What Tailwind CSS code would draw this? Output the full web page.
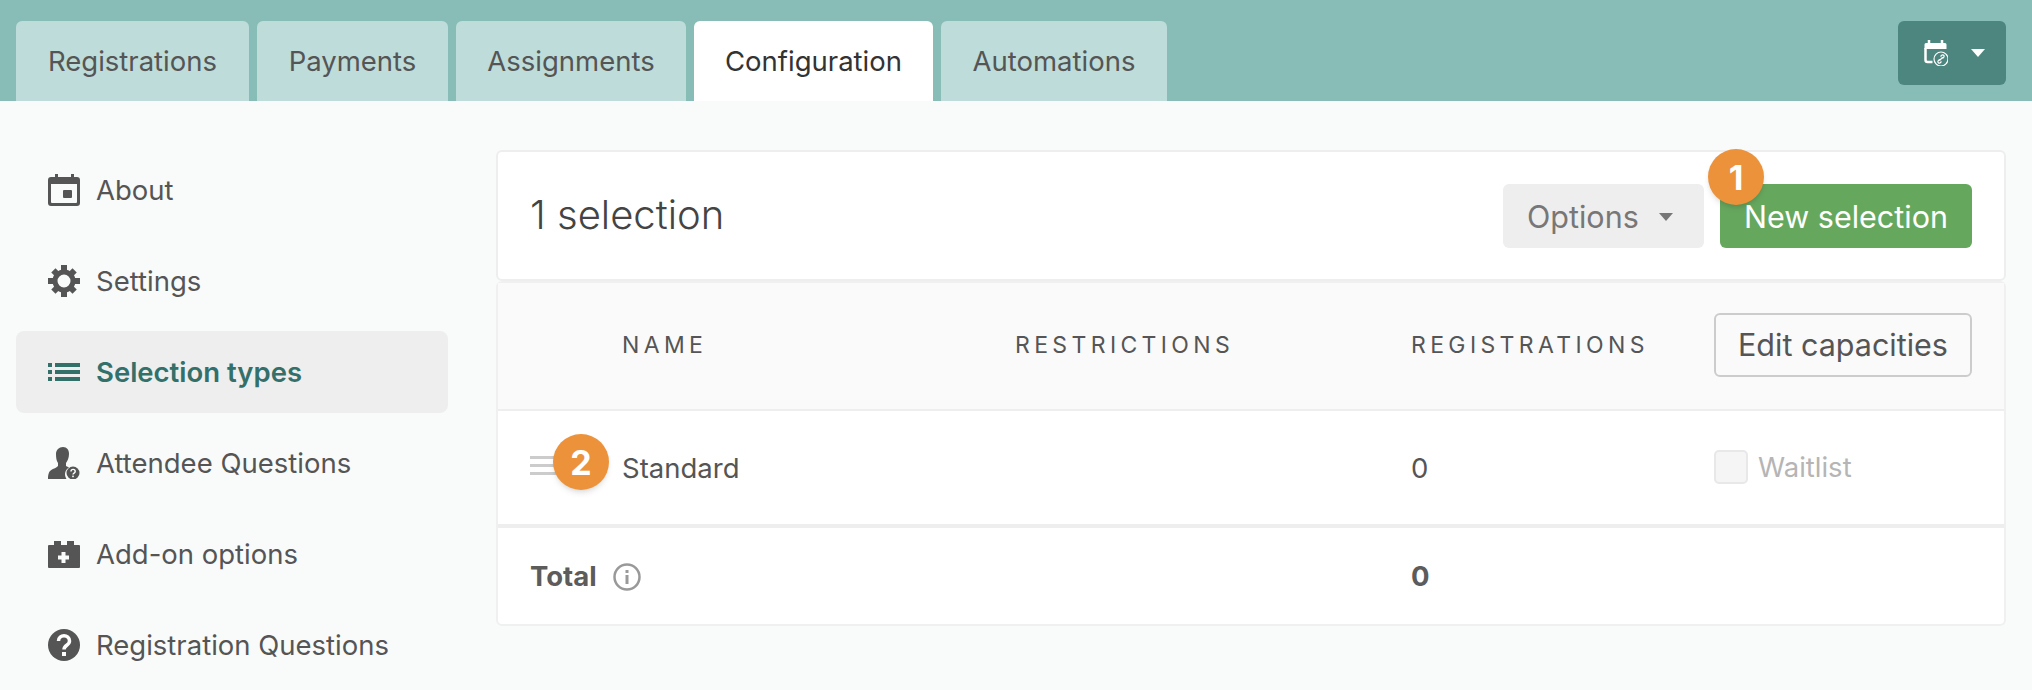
<!DOCTYPE html>
<html>
  <head>
    <meta charset="UTF-8" />
    <title>Configuration</title>
    <script src="https://cdn.jsdelivr.net/npm/@tailwindcss/browser@4"></script>
  </head>

  <body class="h-[690px] overflow-hidden bg-[#f9fbfa] font-['Inter',sans-serif] text-[#555]">
    <!-- top tabs -->
    <header class="h-[101px] bg-[#87bdb6] flex items-end justify-between pl-4 pr-[26px]">
      <nav class="flex gap-2 text-[27.5px]">
        <a class="h-20 w-[233px] pt-[2px] flex items-center justify-center rounded-t-md bg-[#bedcd9]">Registrations</a>
        <a class="h-20 w-[191px] pt-[2px] flex items-center justify-center rounded-t-md bg-[#bedcd9]">Payments</a>
        <a class="h-20 w-[230px] pt-[2px] flex items-center justify-center rounded-t-md bg-[#bedcd9]">Assignments</a>
        <a class="h-20 w-[239px] pt-[2px] flex items-center justify-center rounded-t-md bg-white text-[#333]">Configuration</a>
        <a class="h-20 w-[226px] pt-[2px] flex items-center justify-center rounded-t-md bg-[#bedcd9]">Automations</a>
      </nav>
      <button class="h-16 w-[108px] mb-4 pl-[26px] flex items-center gap-[23px] rounded-md bg-[#4d867f]">
        <svg class="w-6 h-[26px]" viewBox="0 0 24 26" fill="none">
          <path d="M2 3h19a1.500 1.500 0 0 1 1.500 1.500V9H.5V4.500A1.500 1.500 0 0 1 2 3z" fill="#fff" />
          <path d="M5 0v4M18 0v4" stroke="#fff" stroke-width="2.500" />
          <path d="M1.500 8v12a2 2 0 0 0 2 2h5" stroke="#fff" stroke-width="2.500" />
          <circle cx="17" cy="19" r="7" fill="#4d867f" stroke="#fff" stroke-width="1.200" />
          <path d="M15.500 19.500l-1.500 1.500a1.500 1.500 0 0 0 2 2l1.500-1.500M18.500 18.500l1.500-1.500a1.500 1.500 0 0 0-2-2l-1.500 1.500M15.500 20.500l3-3" stroke="#fff" stroke-width="1.200" />
        </svg>
        <span class="w-0 h-0 border-x-[7px] border-x-transparent border-t-[8px] border-t-white"></span>
      </button>
    </header>

    <div class="flex pl-4 pr-[26px]">
      <!-- side menu -->
      <aside class="w-[432px] pt-12 flex flex-col gap-[9px] text-[27.5px]">
        <a class="h-[82px] pl-8 flex items-center gap-4 rounded-lg">
          <svg class="w-8 h-8 shrink-0" viewBox="0 0 32 32" fill="#555">
            <path d="M7 0h3v3h13V0h3v3h3a3 3 0 0 1 3 3v23a3 3 0 0 1-3 3H3a3 3 0 0 1-3-3V6a3 3 0 0 1 3-3h4zM3 10v18a1 1 0 0 0 1 1h24a1 1 0 0 0 1-1V10z" fill-rule="evenodd" />
            <rect x="15" y="16" width="9" height="8" rx="1" />
          </svg>
          <span class="mt-[2px]">About</span>
        </a>
        <a class="h-[82px] pl-8 flex items-center gap-4 rounded-lg">
          <svg class="w-8 h-8 shrink-0" viewBox="0 0 32 32" fill="#555">
            <circle cx="16" cy="16" r="9" fill="none" stroke="#555" stroke-width="5" />
            <rect x="13" y="0" width="6" height="6" />
            <rect x="13" y="26" width="6" height="6" />
            <rect x="0" y="13" width="6" height="6" />
            <rect x="26" y="13" width="6" height="6" />
            <rect x="13" y="1" width="6" height="6" transform="rotate(45 16 16)" />
            <rect x="13" y="25" width="6" height="6" transform="rotate(45 16 16)" />
            <rect x="1" y="13" width="6" height="6" transform="rotate(45 16 16)" />
            <rect x="25" y="13" width="6" height="6" transform="rotate(45 16 16)" />
          </svg>
          <span class="mt-[2px]">Settings</span>
        </a>
        <a class="h-[82px] pl-8 flex items-center gap-4 rounded-lg bg-[#eeeeee] font-semibold text-[#34706a]">
          <svg class="w-8 h-5 shrink-0" viewBox="0 0 32 20" fill="#34706a">
            <rect x="0" y="1" width="4" height="4" />
            <rect x="0" y="8" width="4" height="4" />
            <rect x="0" y="15" width="4" height="4" />
            <rect x="7" y="1" width="25" height="4" />
            <rect x="7" y="8" width="25" height="4" />
            <rect x="7" y="15" width="25" height="4" />
          </svg>
          <span class="mt-[2px]">Selection types</span>
        </a>
        <a class="h-[82px] pl-8 flex items-center gap-4 rounded-lg">
          <svg class="w-8 h-8 shrink-0" viewBox="0 0 32 32" fill="#555">
            <path d="M15 0c4 0 6 3 6 7 0 4-1.500 7-3 9v3c1 .6 2 1 3 1.500A8 8 0 0 0 17 27c0 1.800.5 3.500 1.500 5H0c0-5 1-8 4-9.500 2-1 4-1.500 6-3.500v-3C8.500 14 8 11 8 7c0-4 3-7 7-7z" />
            <circle cx="25" cy="26" r="6.500" />
            <path d="M23 24.500c0-2.800 4.200-2.800 4.200 0 0 1.700-2.200 1.500-2.200 3" fill="none" stroke="#fff" stroke-width="1.400" />
            <rect x="24.200" y="28.600" width="1.600" height="1.600" fill="#fff" />
          </svg>
          <span class="mt-[2px]">Attendee Questions</span>
        </a>
        <a class="h-[82px] pl-8 flex items-center gap-4 rounded-lg">
          <svg class="w-8 h-[27px] shrink-0" viewBox="0 0 32 27" fill="#555">
            <path d="M6 0h7v4h6V0h7v4h5a1 1 0 0 1 1 1v21a1 1 0 0 1-1 1H1a1 1 0 0 1-1-1V5a1 1 0 0 1 1-1h5z" />
            <path d="M13.500 11h4v3.500H21v4h-3.500V22h-4v-3.500H10v-4h3.500z" fill="#f9fbfa" />
          </svg>
          <span class="mt-[2px]">Add-on options</span>
        </a>
        <a class="h-[82px] pl-8 flex items-center gap-4 rounded-lg">
          <svg class="w-8 h-8 shrink-0" viewBox="0 0 32 32">
            <circle cx="16" cy="16" r="16" fill="#555" />
            <path d="M10.500 12c0-7 11-7 11 0 0 4.500-5.500 4-5.500 8.500" fill="none" stroke="#fff" stroke-width="3.500" />
            <rect x="14" y="23" width="4" height="4" fill="#fff" />
          </svg>
          <span class="mt-[2px]">Registration Questions</span>
        </a>
      </aside>

      <!-- selections -->
      <main class="ml-12 flex-1 pt-[49px]">
        <section class="relative h-[131px] px-8 flex items-center justify-between rounded-md border-2 border-[#eeeeee] bg-white">
          <h1 class="text-[40px] font-light text-[#444] -mt-[2px]">1 selection</h1>
          <div class="flex gap-4 text-[30.5px]">
            <button class="w-[201px] h-16 pl-6 pt-[2px] flex items-center gap-5 rounded-md bg-[#eeeeee] text-[#777]">
              Options
              <span class="w-0 h-0 border-x-[7px] border-x-transparent border-t-[8px] border-t-[#777]"></span>
            </button>
            <button class="w-[252px] h-16 pt-[2px] flex items-center justify-center rounded-md bg-[#66a75e] text-white">New selection</button>
          </div>
          <span class="absolute left-[1210px] -top-[3px] w-14 h-14 flex items-center justify-center rounded-full bg-[#ec923b] text-white text-[34px] font-bold shadow-md">1</span>
        </section>

        <section class="rounded-md border-2 border-[#f0f0f0] bg-white">
          <div class="h-[128px] grid grid-cols-[92px_393px_396px_303px_1fr] items-center pl-8 bg-[#fafafa] border-b-2 border-[#eeeeee] text-[23px] tracking-[0.19em]">
            <span></span>
            <span class="-mt-[2px]">NAME</span>
            <span class="-mt-[2px]">RESTRICTIONS</span>
            <span class="-mt-[2px]">REGISTRATIONS</span>
            <button class="w-[258px] h-16 -mt-[2px] flex items-center justify-center rounded-md border-2 border-[#cccccc] bg-transparent text-[30.5px] tracking-normal">Edit capacities</button>
          </div>
          <div class="relative h-[117px] grid grid-cols-[92px_393px_396px_303px_1fr] items-center pl-8 border-b-4 border-[#eeeeee] text-[27.5px]">
            <span class="flex flex-col gap-[5px] w-8 -mt-1">
              <i class="block h-[3px] bg-[#cccccc]"></i>
              <i class="block h-[3px] bg-[#cccccc]"></i>
              <i class="block h-[3px] bg-[#cccccc]"></i>
            </span>
            <span class="mt-[2px]">Standard</span>
            <span></span>
            <span class="mt-[2px]">0</span>
            <label class="flex items-center gap-[10px] text-[#b5b5b5]">
              <span class="w-[34px] h-[34px] -mt-[2px] rounded-[5px] border-2 border-[#e8e8e8] bg-[#f5f5f5]"></span>
              Waitlist
            </label>
            <span class="absolute left-[55px] top-[23px] w-14 h-14 flex items-center justify-center rounded-full bg-[#ec923b] text-white text-[34px] font-bold shadow-md">2</span>
          </div>
          <div class="h-[96px] grid grid-cols-[485px_396px_1fr] items-center pl-8 text-[27.5px] font-bold text-[#5c5c5c]">
            <span class="flex items-center gap-4 mt-[2px]">
              Total
              <svg class="w-7 h-7" viewBox="0 0 28 28" fill="none">
                <circle cx="14" cy="14" r="12.500" stroke="#999" stroke-width="2.500" />
                <rect x="12.500" y="12" width="3" height="9" fill="#999" />
                <rect x="12.500" y="7" width="3" height="3" fill="#999" />
              </svg>
            </span>
            <span></span>
            <span class="mt-[2px]">0</span>
          </div>
        </section>
      </main>
    </div>
  </body>
</html>
